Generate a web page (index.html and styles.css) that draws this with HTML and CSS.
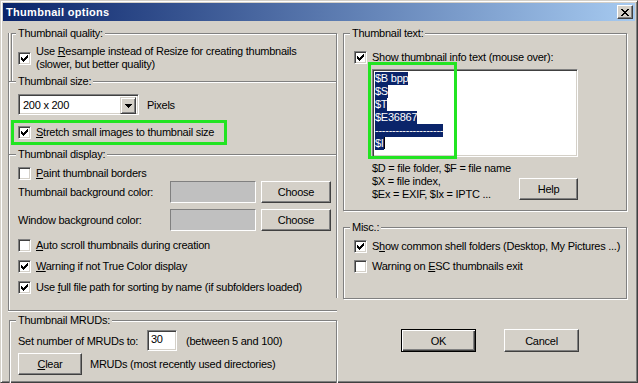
FILE: index.html
```html
<!DOCTYPE html>
<html lang="en">
<head>
  <meta charset="UTF-8" />
  <title>Thumbnail options</title>
  <link rel="stylesheet" href="styles.css">
</head>
<body>

<div class="window">
  <div class="titlebar">
    <span class="title">Thumbnail options</span>
    <button class="close-btn">
      <svg width="8" height="7" viewBox="0 0 8 7" shape-rendering="crispEdges"><path d="M0 0h2v1H0z M6 0h2v1H6z M1 1h2v1H1z M5 1h2v1H5z M2 2h4v1H2z M3 3h2v1H3z M2 4h4v1H2z M1 5h2v1H1z M5 5h2v1H5z M0 6h2v1H0z M6 6h2v1H6z" fill="#000"/></svg>
    </button>
  </div>

  <div class="content">
    <div class="col-left">
      <div class="left-panel">

        <div class="group quality">
          <div class="legend">Thumbnail quality:</div>
          <div class="check-row quality-row">
            <span class="check on"></span>
            <span>Use <u>R</u>esample instead of Resize for creating thumbnails<br>(slower, but better quality)</span>
          </div>
        </div>

        <div class="section size">
          <div class="legend">Thumbnail size:</div>
          <div class="size-row">
            <div class="combo">
              <span class="combo-text">200 x 200</span>
              <span class="combo-btn">
                <svg width="7" height="4" viewBox="0 0 7 4" shape-rendering="crispEdges"><path d="M0 0h7v1H0z M1 1h5v1H1z M2 2h3v1H2z M3 3h1v1H3z" fill="#000"/></svg>
              </span>
            </div>
            <span class="unit">Pixels</span>
          </div>
          <div class="highlight-row">
            <div class="check-row">
              <span class="check on"></span>
              <span><u>S</u>tretch small images to thumbnail size</span>
            </div>
          </div>
        </div>

        <div class="section display">
          <div class="legend">Thumbnail display:</div>
          <div class="check-row item first">
            <span class="check"></span>
            <span><u>P</u>aint thumbnail borders</span>
          </div>
          <div class="color-row">
            <span class="color-label">Thumbnail background color:</span>
            <span class="swatch"></span>
            <button class="btn choose">Choose</button>
          </div>
          <div class="color-row second">
            <span class="color-label">Window background color:</span>
            <span class="swatch"></span>
            <button class="btn choose">Choose</button>
          </div>
          <div class="check-row item spaced">
            <span class="check"></span>
            <span><u>A</u>uto scroll thumbnails during creation</span>
          </div>
          <div class="check-row item spaced">
            <span class="check on"></span>
            <span><u>W</u>arning if not True Color display</span>
          </div>
          <div class="check-row item spaced">
            <span class="check on"></span>
            <span>Use <u>f</u>ull file path for sorting by name (if subfolders loaded)</span>
          </div>
        </div>

      </div>

      <div class="group mruds">
        <div class="legend">Thumbnail MRUDs:</div>
        <div class="mrud-row">
          <span class="mrud-label">Set number of MRUDs to:</span>
          <span class="number-field">30</span>
          <span class="mrud-hint">(between 5 and 100)</span>
        </div>
        <div class="mrud-row clear-row">
          <button class="btn clear"><u>C</u>lear</button>
          <span class="mrud-hint">MRUDs (most recently used directories)</span>
        </div>
      </div>
    </div>

    <div class="col-right">
      <div class="group text-group">
        <div class="legend">Thumbnail text:</div>
        <div class="check-row right-item">
          <span class="check on"></span>
          <span>Show thumbnail info text (mouse over):</span>
        </div>
        <div class="memo-wrap">
          <div class="memo">
            <div><span class="sel">$B bpp</span></div>
            <div><span class="sel">$S</span></div>
            <div><span class="sel">$T</span></div>
            <div><span class="sel">$E36867</span></div>
            <div><span class="sel">--------------------</span></div>
            <div><span class="sel">$I</span><span class="caret"></span></div>
          </div>
          <div class="marker"></div>
        </div>
        <div class="help-row">
          <div class="help-text">
            $D = file folder, $F = file name<br>
            $X = file index,<br>
            $Ex = EXIF, $Ix = IPTC ...
          </div>
          <button class="btn help">Help</button>
        </div>
      </div>

      <div class="group misc">
        <div class="legend">Misc.:</div>
        <div class="check-row right-item first">
          <span class="check on"></span>
          <span>S<u>h</u>ow common shell folders (Desktop, My Pictures ...)</span>
        </div>
        <div class="check-row right-item second">
          <span class="check"></span>
          <span>Warning on <u>E</u>SC thumbnails exit</span>
        </div>
      </div>

      <div class="dialog-buttons">
        <button class="btn ok">OK</button>
        <button class="btn cancel">Cancel</button>
      </div>
    </div>
  </div>
</div>

</body>
</html>
```

FILE: styles.css
```css
* {
  box-sizing: border-box;
}

body {
  margin: 0;
  background-color: #d4d0c8;
  font-family: 'Liberation Sans', Arial, sans-serif;
  font-size: 11px;
  letter-spacing: -0.25px;
  color: #000;
}

u {
  text-decoration: underline;
  text-underline-offset: 1px;
}

.window {
  width: 638px;
  height: 383px;
  background-color: #d4d0c8;
  border: 1px solid;
  border-color: #d4d0c8 #404040 #404040 #d4d0c8;
  box-shadow: inset 1px 1px #fff, inset -1px -1px #808080;
  padding: 2px;
}

.titlebar {
  height: 18px;
  background: linear-gradient(to right, #0a246a, #a6caf0);
  display: flex;
  align-items: center;
  justify-content: space-between;
  padding: 0 2px 0 3px;
}

.title {
  color: #fff;
  font-weight: bold;
  letter-spacing: 0.3px;
}

.close-btn {
  width: 16px;
  height: 14px;
  padding: 0;
  background-color: #d4d0c8;
  border: 1px solid;
  border-color: #fff #404040 #404040 #fff;
  box-shadow: inset -1px -1px #808080;
  display: flex;
  align-items: center;
  justify-content: center;
}

.content {
  display: flex;
  gap: 6px;
  padding-left: 5px;
}

/* group boxes */

.group {
  border: 1px solid #808080;
  box-shadow: inset 1px 1px #fff, 1px 1px #fff;
}

.section {
  border-top: 1px solid #808080;
  border-right: 1px solid #808080;
  box-shadow: inset 0 1px #fff, 1px 0 #fff;
}

.legend {
  width: max-content;
  height: 13px;
  line-height: 13px;
  margin: -7px 0 0 6px;
  padding: 0 2px;
  background-color: #d4d0c8;
}

.check-row {
  display: flex;
  align-items: center;
  gap: 5px;
  line-height: 13px;
}

.check {
  width: 13px;
  height: 13px;
  flex: none;
  background-color: #fff;
  border: 1px solid;
  border-color: #808080 #fff #fff #808080;
  box-shadow: inset 1px 1px #404040, inset -1px -1px #d4d0c8;
}

.check.on {
  background-image: url("data:image/svg+xml,%3Csvg xmlns='http://www.w3.org/2000/svg' width='7' height='7' shape-rendering='crispEdges'%3E%3Cpath d='M0 2h1v3H0z M1 3h1v3H1z M2 4h1v3H2z M3 3h1v3H3z M4 2h1v3H4z M5 1h1v3H5z M6 0h1v3H6z' fill='%23000'/%3E%3C/svg%3E");
  background-repeat: no-repeat;
  background-position: 2px 2px;
}

.btn {
  font: inherit;
  letter-spacing: inherit;
  color: #000;
  padding: 0;
  background-color: #d4d0c8;
  border: 1px solid;
  border-color: #fff #404040 #404040 #fff;
  box-shadow: inset -1px -1px #808080;
}

/* left column */

.col-left {
  width: 329px;
}

.left-panel {
  height: 278px;
  border-left: 1px solid #808080;
  border-bottom: 1px solid #808080;
  box-shadow: inset 1px 0 #fff, 0 1px #fff;
}

.quality {
  margin: 12px 0 0 2px;
  width: 326px;
  height: 48px;
  border-bottom: 0;
}

.quality .legend {
  margin-left: 4px;
}

.quality-row {
  margin: 5px 0 0 6px;
}

.size {
  width: 328px;
  height: 73px;
}

.display {
  width: 328px;
  height: 144px;
}

.section .legend {
  margin-left: 7px;
}

.size-row {
  display: flex;
  align-items: center;
  margin: 6px 0 0 9px;
}

.combo {
  width: 121px;
  height: 21px;
  display: flex;
  padding: 2px;
  background-color: #fff;
  border: 1px solid;
  border-color: #808080 #fff #fff #808080;
  box-shadow: inset 1px 1px #404040, inset -1px -1px #d4d0c8;
}

.combo-text {
  flex: 1;
  padding-left: 2px;
  line-height: 17px;
}

.combo-btn {
  width: 16px;
  height: 17px;
  background-color: #d4d0c8;
  border: 1px solid;
  border-color: #d4d0c8 #404040 #404040 #d4d0c8;
  box-shadow: inset 1px 1px #fff, inset -1px -1px #808080;
  display: flex;
  align-items: center;
  justify-content: center;
}

.unit {
  margin-left: 8px;
}

.highlight-row {
  margin: 5px 0 0 2px;
  width: 216px;
  height: 25px;
  border: 3px solid #22e422;
  padding-left: 4px;
  display: flex;
  align-items: center;
}

.display .item {
  margin-left: 9px;
}

.display .first {
  margin-top: 6px;
}

.display .spaced {
  margin-top: 8px;
}

.color-row {
  display: flex;
  align-items: center;
  margin: 1px 0 0 9px;
  height: 22px;
}

.color-row.second {
  margin-top: 6px;
}

.color-label {
  width: 152px;
}

.swatch {
  width: 86px;
  height: 22px;
  background-color: #c0c0c0;
  border: 1px solid;
  border-color: #808080 #fff #fff #808080;
}

.choose {
  width: 70px;
  height: 22px;
  margin-left: 5px;
}

.mruds {
  margin: 9px 0 0 1px;
  width: 328px;
  height: 66px;
}

.mrud-row {
  display: flex;
  align-items: center;
  margin: 3px 0 0 8px;
}

.mrud-label {
  width: 129px;
}

.number-field {
  width: 30px;
  height: 21px;
  line-height: 17px;
  padding-left: 3px;
  background-color: #fff;
  border: 1px solid;
  border-color: #808080 #fff #fff #808080;
  box-shadow: inset 1px 1px #404040, inset -1px -1px #d4d0c8;
}

.mrud-hint {
  margin-left: 9px;
}

.clear-row {
  margin-top: 2px;
}

.clear {
  width: 64px;
  height: 22px;
}

.clear-row .mrud-hint {
  margin-left: 8px;
}

/* right column */

.col-right {
  width: 285px;
}

.text-group {
  margin-top: 12px;
  width: 284px;
  height: 178px;
}

.right-item {
  margin-left: 10px;
}

.text-group .right-item {
  margin-top: 11px;
}

.memo-wrap {
  position: relative;
  margin: 5px 0 0 28px;
  width: 206px;
  height: 88px;
}

.memo {
  height: 100%;
  padding: 2px 0 0 2px;
  line-height: 13px;
  background-color: #fff;
  border: 1px solid;
  border-color: #808080 #fff #fff #808080;
  box-shadow: inset 1px 1px #404040, inset -1px -1px #d4d0c8;
}

.memo div {
  height: 13px;
}

.sel {
  display: inline-block;
  height: 13px;
  vertical-align: top;
  background-color: #0a246a;
  color: #fff;
}

.caret {
  display: inline-block;
  width: 1px;
  height: 12px;
  vertical-align: top;
  background-color: #000;
}

.marker {
  position: absolute;
  left: -4px;
  top: -7px;
  width: 89px;
  height: 97px;
  border: 3px solid #22e422;
}

.help-row {
  display: flex;
  justify-content: space-between;
  margin: 5px 0 0 28px;
  width: 206px;
  line-height: 13px;
}

.help {
  align-self: flex-end;
  width: 59px;
  height: 22px;
  margin-bottom: 1px;
}

.misc {
  margin-top: 16px;
  width: 284px;
  height: 72px;
}

.misc .first {
  margin-top: 6px;
}

.misc .second {
  margin-top: 7px;
}

.dialog-buttons {
  display: flex;
  margin-top: 30px;
}

.ok {
  width: 75px;
  height: 23px;
  margin-left: 58px;
  border: 1px solid #000;
  box-shadow: inset 1px 1px #fff, inset -1px -1px #404040, inset -2px -2px #808080;
}

.cancel {
  width: 75px;
  height: 23px;
  margin-left: 28px;
}
```
